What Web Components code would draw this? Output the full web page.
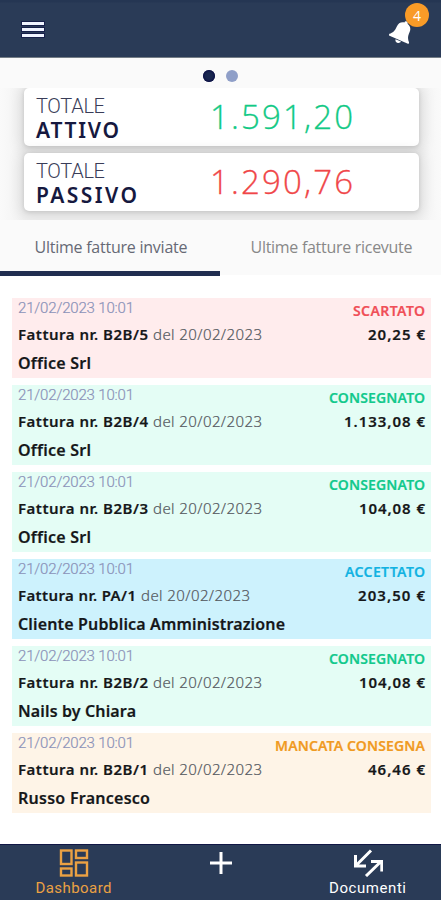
<!DOCTYPE html>
<html lang="it">
<head>
<meta charset="utf-8">
<title>Dashboard</title>
<style>
html,body{margin:0;height:100%;background:#fff}
body{font-family:Roboto,"Noto Sans",sans-serif}
</style>
</head>
<body>
<invoice-app></invoice-app>
<script>
function define(name, html, ready) {
  customElements.define(name, class extends HTMLElement {
    connectedCallback() {
      if (this.shadowRoot) return;
      this.attachShadow({ mode: 'open' }).innerHTML = typeof html === 'function' ? html(this) : html;
      if (ready) ready(this);
    }
  });
}

/* A single line of text tracked out or in to a given width (w, in px). */
define('fit-text', e => `<style>
:host{display:inline-block;white-space:pre;width:${e.getAttribute('w')}px}
span{display:inline-block}
</style><span>${e.getAttribute('text')}</span>`, e => {
  const s = e.shadowRoot.querySelector('span');
  const n = s.textContent.length, gap = (+e.getAttribute('w') - s.getBoundingClientRect().width) / (n - 1);
  s.style.letterSpacing = gap + 'px';
  s.style.marginRight = -gap + 'px';
});

define('top-bar', `<style>
:host{display:flex;box-sizing:border-box;height:58px;padding:0 26px 0 22px;align-items:center;justify-content:space-between;background:linear-gradient(#253653 0 2px,#2a3b57 3px);border-bottom:1px solid #747d86}
.menu{display:grid;gap:3px;margin-top:2px}
.menu i{width:22px;height:3px;background:#f0f4ff;box-shadow:0 0 0 1px #171f4b}
.bell{position:relative;width:26px;height:26px;margin-top:7px}
svg{display:block}
.badge{position:absolute;left:16px;top:-16px;width:24px;height:24px;border-radius:50%;background:#f99b27;color:#fff;font:400 14px/25px "Open Sans",sans-serif;text-align:center}
</style>
<div class="menu"><i></i><i></i><i></i></div>
<div class="bell"><svg width="26" height="26" viewBox="0 0 26 26"><g transform="rotate(24 13 13)" fill="#fff"><path d="M13 1.500c1.200 0 1.700.7 1.700 1.800 3.500.8 5.300 3.300 5.300 6.700 0 5 1 7.200 3.800 9.800v1.600H2.200v-1.600C5 17.200 6 15 6 10c0-3.400 1.800-5.900 5.300-6.700 0-1.100.5-1.800 1.700-1.800z"/><path d="M10 22.200h6c-.3 1.700-1.500 2.600-3 2.600s-2.700-.9-3-2.600z"/></g></svg><span class="badge">4</span></div>`);

define('page-dots', `<style>
:host{display:flex;height:30px;box-sizing:border-box;padding-top:12px;justify-content:center;gap:11px;background:#fafafa}
i{width:12px;height:12px;border-radius:50%;background:#8f9fc8}
.current{background:#1a2850;box-shadow:inset 0 0 2px 1px #0b0e45}
</style><i class="current"></i><i></i>`);

define('total-card', e => `<style>
:host{display:flex;box-sizing:border-box;height:58px;padding:0 66px 0 12px;justify-content:space-between;background:#fff;border-radius:5px;color:#16193f;box-shadow:0 1px 4px #0000001f,0 2px 13px 4px #0000001a}
.label{display:grid;align-content:start;padding-top:7px}
.a{font:300 20px/23px Roboto,sans-serif;color:#3a3d58}
.b{font:700 21px/24px "Noto Sans",sans-serif;font-weight:600}
.v{font:300 33px/57px "Open Sans",sans-serif;color:${e.getAttribute('color')};-webkit-text-stroke:.3px}
</style><div class="label"><fit-text class="a" w="69" text="TOTALE"></fit-text><fit-text class="b" w="${e.getAttribute('lw')}" text="${e.getAttribute('label')}"></fit-text></div><fit-text class="v" w="143" text="${e.getAttribute('value')}"></fit-text>`);

define('totals-panel', `<style>
:host{display:grid;box-sizing:border-box;height:132px;padding:0 22px 9px 24px;gap:7px;align-content:start;background:linear-gradient(90deg,#fafafa,#f2f2f2 24px,#f2f2f2 417px,#fafafa);overflow:hidden}
</style>
<total-card label="ATTIVO" lw="83" value="1.591,20" color="#12c985"></total-card>
<total-card label="PASSIVO" lw="101" value="1.290,76" color="#f04648"></total-card>`);

define('tab-bar', `<style>
:host{display:grid;grid-template-columns:220px 1fr;grid-template-rows:56px;height:56px;background:#fafafa}
div{box-sizing:border-box;height:56px;text-align:center;font:400 16px/55px "Open Sans",sans-serif;color:#666975;padding-left:2px}
.current{border-bottom:5px solid #212e50}
.other{color:#888;border-bottom:1px solid #fff}
</style><div class="current"><fit-text w="153" text="Ultime fatture inviate"></fit-text></div><div class="other"><fit-text w="162" text="Ultime fatture ricevute"></fit-text></div>`);

define('invoice-row', e => { const g = k => e.getAttribute(k); return `<style>
:host{display:grid;box-sizing:border-box;height:80px;padding:0 6px;grid-template-columns:auto auto;grid-template-rows:24px 26px 30px;justify-content:space-between;background:${g('bg')};font:600 15px/24px "Noto Sans",sans-serif;color:#151719;-webkit-text-stroke:.2px}
.date{font:300 15px/20px Roboto,sans-serif;color:#8a91b8}
.status{color:${g('color')};font-size:14px;line-height:25px;justify-self:end}
.line{display:flex;gap:5px;line-height:24px}
.del{font-weight:300;color:#55595f}
.amount{justify-self:end;line-height:25px}
.client{font-size:16px;line-height:31px}
</style>
<fit-text class="date" w="116" text="21/02/2023 10:01"></fit-text>
<fit-text class="status" w="${g('sw')}" text="${g('status')}"></fit-text>
<div class="line"><fit-text w="${g('nw')}" text="Fattura nr. ${g('nr')}"></fit-text><fit-text class="del" w="109" text="del 20/02/2023"></fit-text></div>
<fit-text class="amount" w="${g('aw')}" text="${g('amount')}"></fit-text>
<fit-text class="client" w="${g('cw')}" text="${g('client')}"></fit-text>`; });

define('invoice-list', `<style>
:host{display:flex;flex-direction:column;gap:7px;flex:1;padding:22px 10px 0 12px;background:#fff}
</style>
<invoice-row bg="#ffeced" color="#f04e57" status="SCARTATO" sw="72" nr="B2B/5" nw="130" amount="20,25 €" aw="57" client="Office Srl" cw="73"></invoice-row>
<invoice-row bg="#e4fdf5" color="#12c98c" status="CONSEGNATO" sw="96" nr="B2B/4" nw="130" amount="1.133,08 €" aw="81" client="Office Srl" cw="73"></invoice-row>
<invoice-row bg="#e4fdf5" color="#12c98c" status="CONSEGNATO" sw="96" nr="B2B/3" nw="130" amount="104,08 €" aw="66" client="Office Srl" cw="73"></invoice-row>
<invoice-row bg="#cdf2fd" color="#12b2e2" status="ACCETTATO" sw="80" nr="PA/1" nw="118" amount="203,50 €" aw="67" client="Cliente Pubblica Amministrazione" cw="267"></invoice-row>
<invoice-row bg="#e4fdf5" color="#12c98c" status="CONSEGNATO" sw="96" nr="B2B/2" nw="130" amount="104,08 €" aw="66" client="Nails by Chiara" cw="118"></invoice-row>
<invoice-row bg="#fef4e7" color="#f09a22" status="MANCATA CONSEGNA" sw="150" nr="B2B/1" nw="130" amount="46,46 €" aw="57" client="Russo Francesco" cw="132"></invoice-row>`);

define('nav-bar', `<style>
:host{display:grid;grid-template-columns:1fr 1fr 1fr;box-sizing:border-box;height:56px;background:#2a3b57;border-top:1px solid #111745;color:#fff;font:400 15px/18px Roboto,sans-serif}
div{display:flex;flex-direction:column;align-items:center;padding-top:4px;gap:2px}
.on{color:#eba143}
svg{display:block;fill:none;stroke:currentColor}
</style>
<div class="on"><svg width="30" height="28" viewBox="0 0 30 28" stroke-width="2.400"><rect x="2" y="1.500" width="10.500" height="13.500"/><rect x="17" y="1.500" width="11" height="7.500"/><rect x="2" y="19.500" width="10.500" height="7"/><rect x="17" y="13.500" width="11" height="13"/></svg><fit-text w="76" text="Dashboard"></fit-text></div>
<div><svg width="28" height="28" viewBox="0 0 28 28" stroke-width="3"><path d="M14 3v22M3 14h22"/></svg></div>
<div><svg width="30" height="28" viewBox="0 0 30 28" stroke-width="3"><path d="M18 1.500 3 16.500M2.500 6v11h10.500M13 27 28 12.500M18 12.500h10.800V22.500"/></svg><fit-text w="77" text="Documenti"></fit-text></div>`);

define('invoice-app', `<style>:host{display:flex;flex-direction:column;width:441px;height:900px;overflow:hidden}</style>
<top-bar></top-bar><page-dots></page-dots><totals-panel></totals-panel><tab-bar></tab-bar><invoice-list></invoice-list><nav-bar></nav-bar>`);
</script>
</body>
</html>
